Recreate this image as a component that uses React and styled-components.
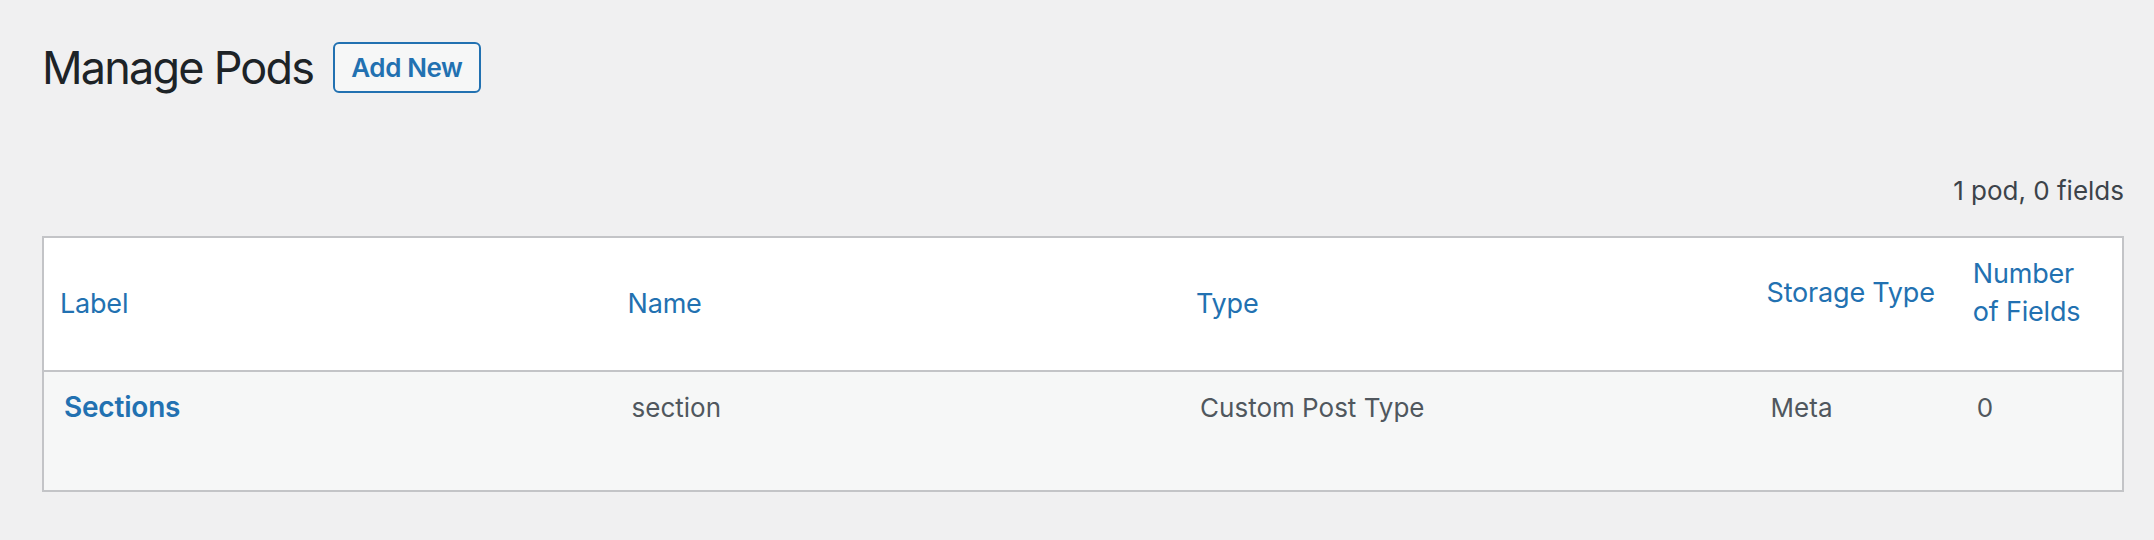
import styled, { createGlobalStyle } from "styled-components";

const GlobalStyle = createGlobalStyle`
  html, body {
    margin: 0;
    padding: 0;
    background: #f0f0f1;
  }
  body {
    font-family: Inter, "Noto Sans", "Liberation Sans", sans-serif;
    color: #3c434a;
  }
`;

const Wrap = styled.div`
  padding: 42px 30px 40px 42px;
`;

const TitleRow = styled.div`
  display: flex;
  align-items: center;
  gap: 20px;
  height: 51px;
`;

const PageTitle = styled.h1`
  margin: 0;
  font-size: 45px;
  font-weight: 400;
  line-height: 51px;
  color: #1d2327;
  letter-spacing: -1.8px;
`;

const AddButton = styled.a`
  box-sizing: border-box;
  height: 51px;
  display: inline-flex;
  align-items: center;
  padding: 0 16px;
  border: 2px solid #2271b1;
  border-radius: 6px;
  background: #f6f7f7;
  color: #2271b1;
  font-size: 26px;
  font-weight: 600;
  letter-spacing: -0.4px;
  text-decoration: none;
  cursor: pointer;
`;

const Count = styled.div`
  margin-top: 80px;
  margin-bottom: 27px;
  text-align: right;
  font-size: 26px;
  line-height: 36px;
  color: #3c434a;
`;

const Table = styled.table`
  width: 100%;
  table-layout: fixed;
  border-collapse: collapse;
  border: 2px solid #c3c4c7;
  background: #fff;
`;

const HeadCell = styled.th`
  box-sizing: border-box;
  height: 134px;
  padding: 0 16px ${(props) => (props.raised ? "23px" : "0")} 16px;
  text-align: left;
  vertical-align: middle;
  white-space: ${(props) => (props.nowrap ? "nowrap" : "normal")};
  font-weight: 400;
  font-size: 27px;
  line-height: 38px;
  letter-spacing: -0.2px;
  color: #2271b1;
  border-bottom: 2px solid #c3c4c7;
`;

const SortLink = styled.a`
  color: #2271b1;
  text-decoration: none;
  cursor: pointer;
`;

const Row = styled.tr`
  background: #f6f7f7;
`;

const Cell = styled.td`
  height: 120px;
  box-sizing: border-box;
  padding: 16px 16px 0 20px;
  vertical-align: top;
  font-size: 26px;
  line-height: 39px;
  color: #50575e;
`;

const RowTitle = styled.a`
  font-size: 28px;
  font-weight: 600;
  letter-spacing: -0.2px;
  color: #2271b1;
  text-decoration: none;
`;

const columns = [
  { key: "label", title: "Label", width: 568 },
  { key: "name", title: "Name", width: 568 },
  { key: "type", title: "Type", width: 570 },
  { key: "storage", title: "Storage Type", width: 206, raised: true, nowrap: true },
  { key: "fields", title: "Number of Fields", width: 166, raised: true },
];

const pods = [
  {
    id: 1,
    label: "Sections",
    name: "section",
    type: "Custom Post Type",
    storage: "Meta",
    fields: 0,
  },
];

export default function App() {
  return (
    <>
      <GlobalStyle />
      <Wrap>
        <TitleRow>
          <PageTitle>Manage Pods</PageTitle>
          <AddButton>Add New</AddButton>
        </TitleRow>
        <Count>1 pod, 0 fields</Count>
        <Table>
          <colgroup>
            {columns.map((col) => (
              <col key={col.key} style={{ width: col.width }} />
            ))}
          </colgroup>
          <thead>
            <tr>
              {columns.map((col) => (
                <HeadCell key={col.key} raised={col.raised} nowrap={col.nowrap}>
                  <SortLink>{col.title}</SortLink>
                </HeadCell>
              ))}
            </tr>
          </thead>
          <tbody>
            {pods.map((pod) => (
              <Row key={pod.id}>
                <Cell>
                  <RowTitle>{pod.label}</RowTitle>
                </Cell>
                <Cell>{pod.name}</Cell>
                <Cell>{pod.type}</Cell>
                <Cell>{pod.storage}</Cell>
                <Cell>{pod.fields}</Cell>
              </Row>
            ))}
          </tbody>
        </Table>
      </Wrap>
    </>
  );
}
